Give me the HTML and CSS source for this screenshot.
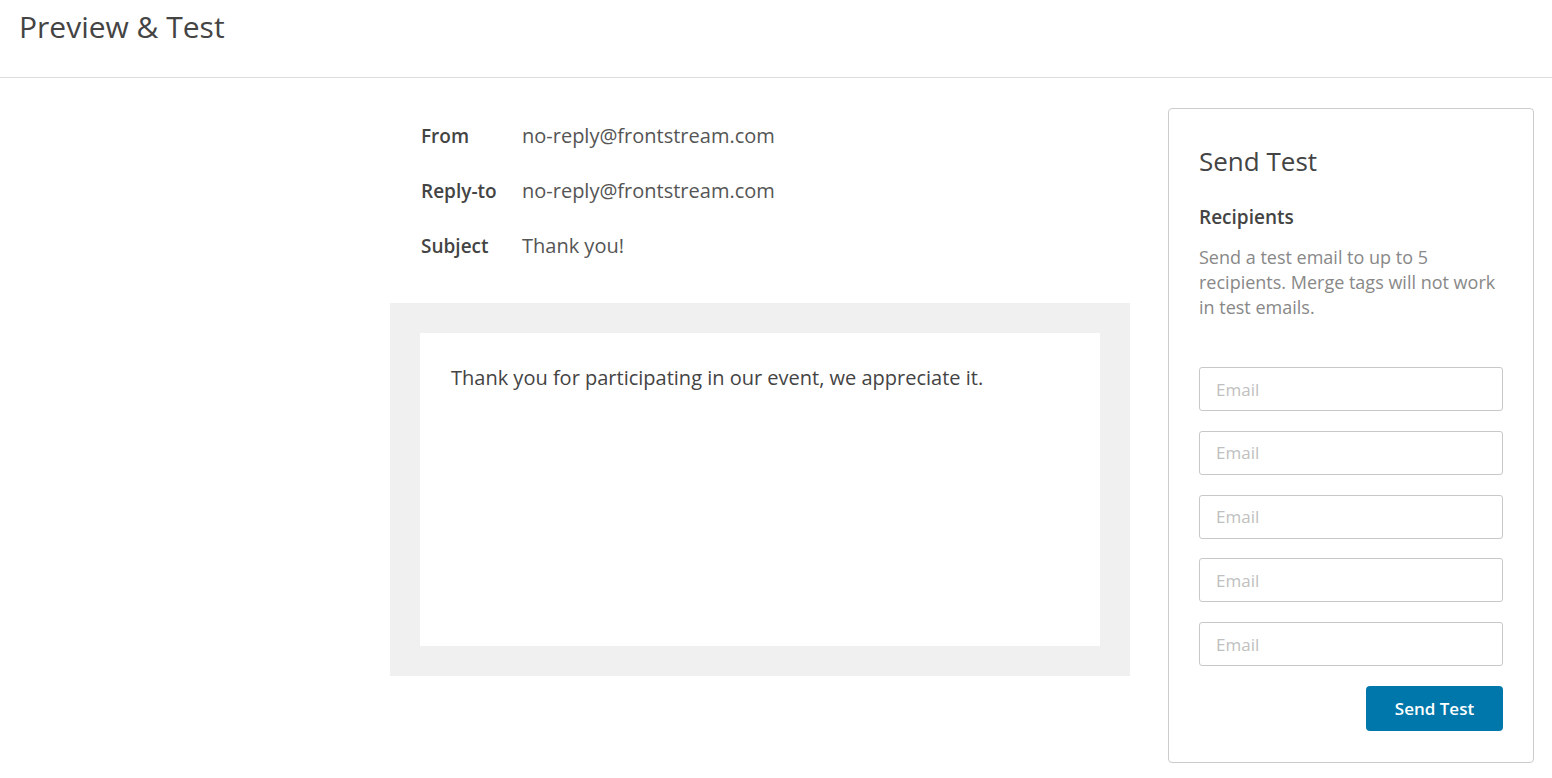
FILE: index.html
```html
<!DOCTYPE html>
<html lang="en">
<head>
    <meta charset="UTF-8">
    <meta name="viewport" content="width=device-width, initial-scale=1.0">
    <title>Preview &amp; Test</title>
    <link rel="stylesheet" href="styles.css">
</head>
<body>
    <header class="page-header">
        <h1>Preview &amp; Test</h1>
    </header>

    <div class="layout">
        <div class="spacer"></div>

        <main class="preview">
            <dl class="meta">
                <dt>From</dt>
                <dd>no-reply@frontstream.com</dd>
                <dt>Reply-to</dt>
                <dd>no-reply@frontstream.com</dd>
                <dt>Subject</dt>
                <dd>Thank you!</dd>
            </dl>
            <div class="email-frame">
                <div class="email-body">
                    <p>Thank you for participating in our event, we appreciate it.</p>
                </div>
            </div>
        </main>

        <aside class="send-test">
            <h2>Send Test</h2>
            <h3>Recipients</h3>
            <p class="hint">Send a test email to up to 5 recipients. Merge tags will not work in test emails.</p>
            <form class="recipients">
                <input type="email" placeholder="Email">
                <input type="email" placeholder="Email">
                <input type="email" placeholder="Email">
                <input type="email" placeholder="Email">
                <input type="email" placeholder="Email">
                <button type="button">Send Test</button>
            </form>
        </aside>
    </div>
</body>
</html>
```

FILE: styles.css
```css
body {
    font-family: "Open Sans", Arial, sans-serif;
    margin: 0;
    color: #444;
    background: #fff;
}
.page-header {
    height: 77px;
    border-bottom: 1px solid #ddd;
    padding: 0 19px;
}
.page-header h1 {
    margin: 0;
    padding-top: 7px;
    font-size: 30px;
    font-weight: 400;
    line-height: 40px;
    color: #444;
}
.layout {
    display: grid;
    grid-template-columns: 1fr 740px 366px;
    column-gap: 38px;
    padding: 30px 18px 16px 0;
}
.meta {
    display: grid;
    grid-template-columns: 101px 1fr;
    row-gap: 25px;
    margin: 13px 0 0 31px;
    line-height: 30px;
}
.meta dt {
    font-size: 19px;
    font-weight: 600;
    color: #444;
}
.meta dd {
    margin: 0;
    font-size: 20px;
    color: #555;
}
.email-frame {
    margin-top: 42px;
    padding: 30px;
    background: #f0f0f0;
}
.email-body {
    background: #fff;
    height: 313px;
    padding: 30px 31px;
    box-sizing: border-box;
}
.email-body p {
    margin: 0;
    font-size: 20px;
    line-height: 30px;
    color: #444;
}
.send-test {
    border: 1px solid #ccc;
    border-radius: 4px;
    padding: 30px 30px 31px;
}
.send-test h2 {
    margin: 0;
    font-size: 26px;
    font-weight: 400;
    line-height: 44px;
    color: #444;
}
.send-test h3 {
    margin: 20px 0 0;
    font-size: 19px;
    font-weight: 600;
    line-height: 28px;
    color: #444;
}
.hint {
    margin: 14px 0 0;
    font-size: 18px;
    line-height: 25px;
    color: #888;
}
.recipients {
    display: flex;
    flex-direction: column;
    gap: 19.75px;
    margin-top: 47px;
}
.recipients input {
    height: 44px;
    box-sizing: border-box;
    padding: 0 16px;
    border: 1px solid #c8c8c8;
    border-radius: 3px;
    font-family: inherit;
    font-size: 17px;
    color: #444;
}
.recipients input::placeholder {
    color: #c0c0c0;
}
.recipients button {
    align-self: flex-end;
    width: 137px;
    height: 45px;
    border: none;
    border-radius: 4px;
    background-color: #0077aa;
    color: #fff;
    font-family: inherit;
    font-size: 17px;
    font-weight: 600;
    cursor: pointer;
}
```
